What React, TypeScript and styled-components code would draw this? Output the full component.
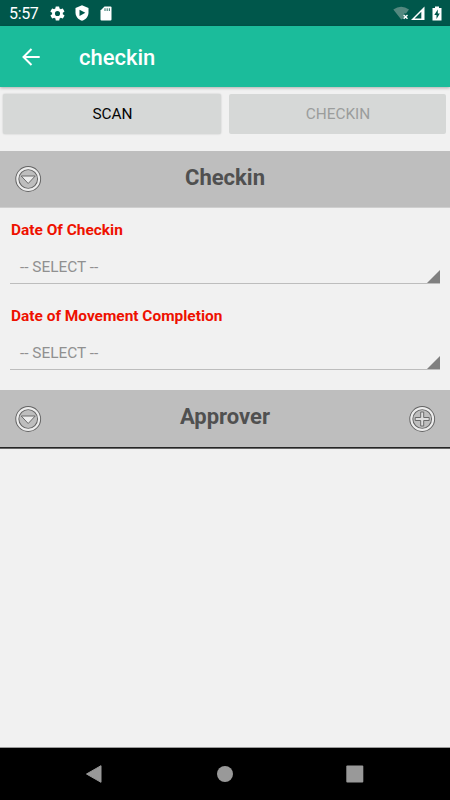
import React from "react";
import styled, { createGlobalStyle } from "styled-components";

const GlobalStyle = createGlobalStyle`
  *, *::before, *::after { box-sizing: border-box; }
  body { margin: 0; background: #f1f1f1; font-family: Roboto, "Noto Sans", sans-serif; }
  svg { display: block; flex: none; }
`;

const Screen = styled.div`
  width: 450px;
  height: 800px;
  display: flex;
  flex-direction: column;
  background: #f1f1f1;
  overflow: hidden;
`;

const StatusBar = styled.header`
  height: 26px;
  flex: none;
  display: flex;
  align-items: center;
  justify-content: space-between;
  padding: 0 8px 0 9px;
  background: #00574b;
  color: #fff;
`;

const StatusGroup = styled.div<{ $gap: number }>`
  display: flex;
  align-items: center;
  gap: ${(p) => p.$gap}px;
`;

const Clock = styled.span`
  width: 31px;
  font-size: 16px;
  line-height: 26px;
  padding-top: 1px;
  letter-spacing: -0.35px;
`;

const AppBar = styled.div`
  height: 61px;
  flex: none;
  display: flex;
  align-items: center;
  gap: 37px;
  padding-left: 20px;
  background: #1bbc9b;
  box-shadow: 0 1px 3px rgba(0, 0, 0, 0.28);
  color: #fff;
`;

const BackButton = styled.button`
  width: 22px;
  height: 22px;
  padding: 0;
  border: 0;
  background: none;
`;

const Title = styled.h1`
  margin: 0;
  padding-top: 3px;
  font-size: 22px;
  line-height: 28px;
  font-weight: 500;
`;

const Actions = styled.div`
  height: 64px;
  flex: none;
  display: grid;
  grid-template-columns: 218px 217px;
  column-gap: 8px;
  padding: 7px 3px 17px;
`;

const ActionButton = styled.button`
  border: 0;
  border-radius: 2px;
  padding: 0 0 0 1px;
  background: #d6d8d7;
  color: #050505;
  font: 400 15.4px/40px Roboto, sans-serif;
  box-shadow: 0 0 2px rgba(0, 0, 0, 0.2);

  &:disabled {
    color: #9b9d9c;
    box-shadow: none;
  }
`;

const SectionHeader = styled.div<{ $underlined?: boolean }>`
  height: ${(p) => (p.$underlined ? 57 : 56)}px;
  flex: none;
  display: grid;
  grid-template-columns: 28px 1fr 28px;
  align-items: center;
  padding: 0 14px;
  background: #bebebe;
`;

const SectionRule = styled.div<{ $dark?: boolean }>`
  height: ${(p) => (p.$dark ? 2 : 1)}px;
  flex: none;
  background: ${(p) => (p.$dark ? "linear-gradient(#262626 50%, #686868 50%)" : "#cfcfcf")};
`;

const SectionTitle = styled.h2`
  margin: 0;
  padding-bottom: 3px;
  text-align: center;
  color: #505050;
  font-size: 22px;
  line-height: 26px;
  font-weight: 700;
`;

const Fields = styled.div`
  height: 182px;
  flex: none;
  padding: 11px 10px 0;
`;

const Field = styled.div`
  height: 86px;
`;

const Label = styled.div`
  padding-left: 1px;
  color: #ee1100;
  font-size: 15.45px;
  line-height: 22px;
  font-weight: 700;
`;

const Picker = styled.div`
  height: 43px;
  display: flex;
  align-items: flex-end;
  justify-content: space-between;
  border-bottom: 1px solid #bdbdbd;
`;

const PickerValue = styled.span`
  padding: 0 0 5px 10px;
  color: #909090;
  font-size: 15.4px;
  line-height: 22px;
`;

const Content = styled.main`
  flex: 1;
`;

const NavBar = styled.nav`
  height: 53px;
  flex: none;
  display: flex;
  align-items: center;
  justify-content: space-between;
  padding: 0 86px 0 85px;
  background: #000;
  border-top: 1px solid #9a9a9a;
`;

const RingIcon = ({ kind }: { kind: "expand" | "add" }) => (
  <svg width="28" height="28" viewBox="0 0 28 28" fill="none">
    <circle cx="14.2" cy="14" r="10.9" stroke="#636363" strokeWidth="4" />
    <circle cx="14.2" cy="14" r="10.9" stroke="#ededed" strokeWidth="2.1" />
    {kind === "expand" ? (
      <path d="M7.200 11H21.200L14.200 18.500Z" fill="#ededed" stroke="#6a6a6a" strokeWidth="1" />
    ) : (
      <path
        d="M12.700 7H15.700V12.500H21.200V15.500H15.700V21H12.700V15.500H7.200V12.500H12.700Z"
        fill="#dedede"
        stroke="#6a6a6a"
        strokeWidth="1"
      />
    )}
  </svg>
);

const SelectField = ({ label }: { label: string }) => (
  <Field>
    <Label>{label}</Label>
    <Picker>
      <PickerValue>-- SELECT --</PickerValue>
      <svg width="13" height="13" viewBox="0 0 13 13">
        <path d="M13 0V13H0Z" fill="#808080" />
      </svg>
    </Picker>
  </Field>
);

export default function App() {
  return (
    <>
      <GlobalStyle />
      <Screen>
        <StatusBar>
          <StatusGroup $gap={10}>
            <Clock>5:57</Clock>
            <svg width="15" height="15" viewBox="1.5 1.5 21 21" fill="#fff">
              <path d="M19.4 13a7.8 7.8 0 0 0 0-2l2.1-1.6a.5.5 0 0 0 .1-.6l-2-3.5a.5.5 0 0 0-.6-.2l-2.5 1a7.3 7.3 0 0 0-1.7-1l-.4-2.6a.5.5 0 0 0-.5-.4h-4a.5.5 0 0 0-.5.4L9 5.1a7.7 7.7 0 0 0-1.7 1l-2.5-1a.5.5 0 0 0-.6.2l-2 3.5a.5.5 0 0 0 .1.6L4.500 11a8 8 0 0 0 0 2l-2.100 1.600a.5.5 0 0 0-.1.600l2 3.500c.1.200.4.300.6.200l2.500-1a7.300 7.300 0 0 0 1.700 1l.4 2.600c0 .2.200.4.500.4h4c.3 0 .5-.2.500-.4l.4-2.600a7.700 7.700 0 0 0 1.700-1l2.500 1c.2.100.5 0 .6-.2l2-3.500a.5.5 0 0 0-.1-.6ZM12 15.600a3.600 3.600 0 1 1 0-7.200 3.600 3.600 0 0 1 0 7.200Z" />
            </svg>
            <svg width="14" height="16" viewBox="0 0 14 16">
              <path d="M7 0.300L13.500 3V7.500C13.500 11.500 10.800 14.600 7 15.700C3.200 14.600.5 11.500.5 7.500V3Z" fill="#fff" />
              <path d="M4.500 4.700V11L10.300 7.800Z" fill="#00574b" />
            </svg>
            <svg width="14" height="15" viewBox="-1 0 14 15">
              <path d="M4.500 0.500H10.500Q11.500.500 11.500 1.500V13.500Q11.500 14.500 10.500 14.500H1.500Q.5 14.500.5 13.500V4.500Z" fill="#fff" />
              <path d="M5 2.300V5M7.200 2.300V5M9.400 2.300V5" stroke="#4b867e" strokeWidth="1.200" />
            </svg>
          </StatusGroup>
          <StatusGroup $gap={2}>
            <svg width="16" height="15" viewBox="0 0 16 15">
              <path d="M0.300 3.500Q8.200-2.200 16 3.500L13 7.500H11V12L8.200 13.500Z" fill="#54887f" />
              <path d="M10.700 9L14.500 12.800M14.500 9L10.700 12.800" stroke="#fff" strokeWidth="1.400" />
            </svg>
            <svg width="14" height="15" viewBox="0 0 14 15">
              <path d="M0 14L13.500 0.500V14Z" fill="#fff" />
              <path d="M10.300 5.800V12.500H3.600Z" fill="#00574b" />
            </svg>
            <svg width="15" height="15" viewBox="2 0 15 15">
              <path d="M10 0.500H14V2H16.500V14.500H7.500V2H10Z" fill="#fff" />
              <path d="M12.800 3.500L9.300 9H11.500V13L14.800 7.500H12.800Z" fill="#00574b" />
            </svg>
          </StatusGroup>
        </StatusBar>
        <AppBar>
          <BackButton aria-label="Back">
            <svg width="22" height="22" viewBox="0 0 22 22" fill="none" stroke="#fff" strokeWidth="2">
              <path d="M19.700 11H3.500M11.500 3L3.500 11L11.500 19" />
            </svg>
          </BackButton>
          <Title>checkin</Title>
        </AppBar>
        <Actions>
          <ActionButton>SCAN</ActionButton>
          <ActionButton disabled>CHECKIN</ActionButton>
        </Actions>
        <SectionHeader>
          <RingIcon kind="expand" />
          <SectionTitle>Checkin</SectionTitle>
        </SectionHeader>
        <SectionRule />
        <Fields>
          <SelectField label="Date Of Checkin" />
          <SelectField label="Date of Movement Completion" />
        </Fields>
        <SectionHeader $underlined>
          <RingIcon kind="expand" />
          <SectionTitle>Approver</SectionTitle>
          <RingIcon kind="add" />
        </SectionHeader>
        <SectionRule $dark />
        <Content />
        <NavBar>
          <svg width="18" height="20" viewBox="0 0 18 20">
            <path d="M1.500 10L16 1.700V18.300Z" fill="#999" stroke="#999" strokeLinejoin="round" />
          </svg>
          <svg width="18" height="18" viewBox="0 0 18 18">
            <circle cx="9" cy="9" r="8" fill="#999" />
          </svg>
          <svg width="18" height="18" viewBox="0 0 18 18">
            <rect x="0.300" y="0.500" width="17" height="17" rx="1" fill="#999" />
          </svg>
        </NavBar>
      </Screen>
    </>
  );
}
